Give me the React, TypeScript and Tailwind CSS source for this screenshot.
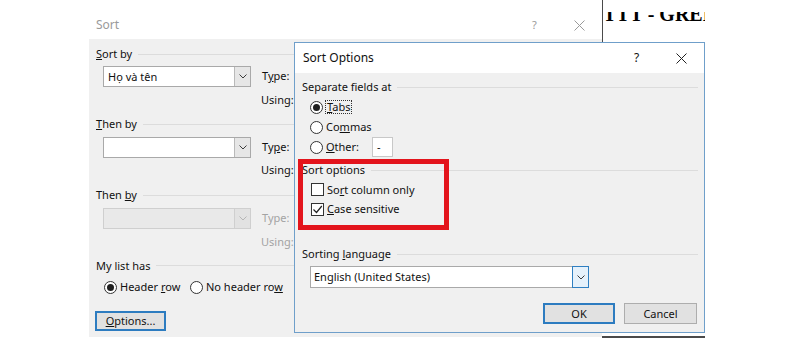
import React from "react";
import clsx from "clsx";

const Chevron = ({ color = "#3c3c3c" }: { color?: string }) => (
  <svg width="8" height="5" viewBox="0 0 8 5">
    <path d="M0.5 0.5 L4 4 L7.5 0.5" fill="none" stroke={color} strokeWidth="1" />
  </svg>
);

const Close = ({ color }: { color: string }) => (
  <svg width="11" height="11" viewBox="0 0 11 11" className="mx-auto">
    <path d="M0.5 0.5 L10.5 10.5 M10.5 0.5 L0.5 10.5" stroke={color} strokeWidth="1" />
  </svg>
);

const Radio = ({ checked }: { checked?: boolean }) => (
  <span className="w-[13px] h-[13px] shrink-0 rounded-full border border-[#333] bg-white flex items-center justify-center">
    {checked && <span className="w-[7px] h-[7px] rounded-full bg-[#1f1f1f]" />}
  </span>
);

const Check = ({ checked }: { checked?: boolean }) => (
  <span className="w-[13px] h-[13px] shrink-0 border border-[#333] bg-white flex items-center justify-center">
    {checked && (
      <svg width="11" height="11" viewBox="0 0 11 11">
        <path d="M1.5 5.5 L4.5 8.5 L9.8 2" fill="none" stroke="#222" strokeWidth="1.2" />
      </svg>
    )}
  </span>
);

const Group = ({ children, className }: { children: React.ReactNode; className?: string }) => (
  <div className={clsx("flex items-center gap-[6px]", className)}>
    <span>{children}</span>
    <span className="flex-1 h-px bg-[#dcdcdc]" />
  </div>
);

const Combo = ({ value, disabled }: { value?: string; disabled?: boolean }) => (
  <div
    className={clsx(
      "w-[148px] h-[21px] flex border",
      disabled ? "bg-[#e9e9e9] border-[#cfcfcf]" : "bg-white border-[#a9a9a9]"
    )}
  >
    <span className="flex-1 pl-[4px] leading-[19px]">{value}</span>
    <span
      className={clsx(
        "w-[16px] h-full flex items-center justify-center border-l",
        disabled ? "bg-[#e2e2e2] border-[#cfcfcf]" : "bg-[#e6e6e6] border-[#b9b9b9]"
      )}
    >
      <Chevron color={disabled ? "#b5b5b5" : "#3c3c3c"} />
    </span>
  </div>
);

const SortDialog = () => (
  <div className="absolute left-[89px] top-0 w-[513px] h-[337px] flex flex-col">
    <div className="h-[39px] flex items-center bg-white text-[#9a9a9a]">
      <span className="pl-[7px] pt-[11px] text-[12px]">Sort</span>
      <span className="ml-auto w-[45px] text-center pt-[11px]">?</span>
      <span className="w-[45px] pt-[11px]">
        <Close color="#9a9a9a" />
      </span>
    </div>
    <div className="flex-1 bg-[#f0f0f0] px-[7px] flex flex-col">
      <Group className="mt-[4px] h-[22px]">
        <u>S</u>ort by
      </Group>
      <div className="h-[22px] flex items-center">
        <div className="ml-[7px]">
          <Combo value="Họ và tên" />
        </div>
        <span className="ml-[11px]">
          T<u>y</u>pe:
        </span>
      </div>
      <div className="h-[22px] mt-[2px] flex items-center">
        <span className="ml-[165px]">Using:</span>
      </div>

      <Group className="mt-[2px] h-[22px]">
        <u>T</u>hen by
      </Group>
      <div className="h-[22px] mt-[1px] flex items-center">
        <div className="ml-[7px]">
          <Combo />
        </div>
        <span className="ml-[11px]">
          Ty<u>p</u>e:
        </span>
      </div>
      <div className="h-[22px] mt-[1px] flex items-center">
        <span className="ml-[165px]">Using:</span>
      </div>

      <Group className="mt-[3px] h-[22px]">
        Then <u>b</u>y
      </Group>
      <div className="h-[22px] mt-[1px] flex items-center text-[#a3a3a3]">
        <div className="ml-[7px]">
          <Combo disabled />
        </div>
        <span className="ml-[11px]">Type:</span>
      </div>
      <div className="h-[22px] mt-[2px] flex items-center text-[#a3a3a3]">
        <span className="ml-[165px]">Using:</span>
      </div>

      <Group className="mt-[2px] h-[21px]">My list has</Group>
      <div className="h-[22px] flex items-center">
        <label className="ml-[8px] w-[86px] flex items-center gap-[3px]">
          <Radio checked />
          <span>
            Header <u>r</u>ow
          </span>
        </label>
        <label className="flex items-center gap-[3px]">
          <Radio />
          <span>
            No header ro<u>w</u>
          </span>
        </label>
      </div>
      <div className="mt-[13px]">
        <button className="ml-[-1px] w-[71px] h-[20px] border-2 border-[#2d7cc0] bg-[#e1e1e1] leading-[16px]">
          <u>O</u>ptions...
        </button>
      </div>
    </div>
  </div>
);

const SortOptions = () => (
  <div className="absolute left-[294px] top-[42px] w-[411px] h-[291px] border border-[#6f9fca] flex flex-col">
    <div className="h-[30px] bg-white flex items-center">
      <span className="pl-[8px] text-[12px] text-[#111]">Sort Options</span>
      <span className="ml-auto w-[45px] text-center text-[12px]">?</span>
      <span className="w-[45px]">
        <Close color="#222" />
      </span>
    </div>
    <div className="flex-1 bg-[#f0f0f0] pl-[7px] pr-[6px] flex flex-col">
      <Group className="mt-[4px] h-[20px]">Separate fields at</Group>
      <div className="h-[20px] flex items-center">
        <span className="ml-[8px]">
          <Radio checked />
        </span>
        <span className="ml-[2px] px-px leading-[12px] border border-dotted border-[#333]">
          <u>T</u>abs
        </span>
      </div>
      <div className="h-[20px] flex items-center">
        <span className="ml-[8px]">
          <Radio />
        </span>
        <span className="ml-[3px]">
          Co<u>m</u>mas
        </span>
      </div>
      <div className="h-[20px] flex items-center">
        <span className="ml-[8px]">
          <Radio />
        </span>
        <span className="ml-[3px] w-[46px]">
          <u>O</u>ther:
        </span>
        <span className="w-[21px] h-[20px] bg-white border border-[#c8c8c8] pl-[4px] leading-[17px]">-</span>
      </div>

      <Group className="mt-[3px] h-[20px]">Sort options</Group>
      <div className="h-[19px] flex items-center">
        <span className="ml-[9px]">
          <Check />
        </span>
        <span className="ml-[3px]">
          So<u>r</u>t column only
        </span>
      </div>
      <div className="h-[20px] flex items-center">
        <span className="ml-[9px]">
          <Check checked />
        </span>
        <span className="ml-[3px]">
          <u>C</u>ase sensitive
        </span>
      </div>

      <Group className="mt-[25px] h-[20px]">
        Sorting <u>l</u>anguage
      </Group>
      <div className="mt-[2px] ml-[8px] w-[279px] h-[22px] flex bg-white border border-[#a9a9a9]">
        <span className="flex-1 pl-[3px] leading-[20px]">English (United States)</span>
        <span className="w-[17px] h-[22px] -mt-px -mr-px flex items-center justify-center bg-[#e5f1fb] border border-[#2f7fc1]">
          <Chevron />
        </span>
      </div>
      <div className="mt-[15px] flex justify-end gap-[9px] mr-[1px]">
        <button className="w-[72px] h-[21px] border-2 border-[#2d7cc0] bg-[#e1e1e1] leading-[17px]">OK</button>
        <button className="w-[73px] h-[21px] border border-[#adadad] bg-[#e1e1e1] leading-[19px]">Cancel</button>
      </div>
    </div>
  </div>
);

export default function App() {
  return (
    <div className="relative w-[800px] h-[352px] overflow-hidden bg-white text-[11px] leading-[16px] text-[#111] font-['Noto_Sans',_'Open_Sans',_sans-serif]">
      <div className="absolute left-[603px] top-[12px] w-[102px] h-[10px] overflow-hidden">
        <div className="-mt-[8px] whitespace-nowrap font-['Liberation_Serif',_serif] font-bold text-[20px] leading-[20px] text-black">
          TTT - GREEN
        </div>
      </div>
      <div className="absolute left-[602px] top-0 w-px h-[43px] bg-[#4a4a4a]" />
      <SortDialog />
      <div className="absolute left-[602px] top-[336px] w-[103px] h-[2px] bg-[#4a4a4a]" />
      <SortOptions />
      <div className="absolute left-[298px] top-[159px] w-[151px] h-[71px] border-[5px] border-[#e3141c]" />
    </div>
  );
}
